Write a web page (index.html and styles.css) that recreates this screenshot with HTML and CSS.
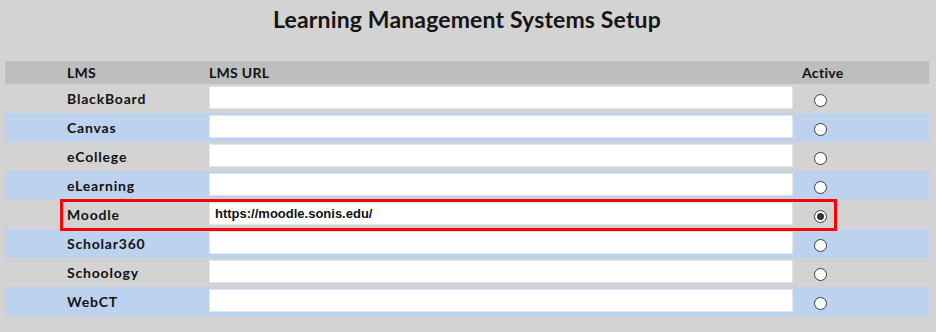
FILE: index.html
```html
<!DOCTYPE html>
<html>
<head>
<meta charset="utf-8">
<link rel="stylesheet" href="styles.css">
</head>
<body>
<div class="page">
  <h1 class="title">Learning Management Systems Setup</h1>
  <div class="table">
    <div class="row head">
      <div class="cell lms">LMS</div>
      <div class="cell url">LMS URL</div>
      <div class="cell act">Active</div>
    </div>
    <div class="row">
      <div class="cell lms">BlackBoard</div>
      <div class="cell url"><input class="field" type="text" value=""></div>
      <div class="cell act"><input class="radio" type="radio" name="lms"></div>
    </div>
    <div class="row alt">
      <div class="cell lms">Canvas</div>
      <div class="cell url"><input class="field" type="text" value=""></div>
      <div class="cell act"><input class="radio" type="radio" name="lms"></div>
    </div>
    <div class="row">
      <div class="cell lms">eCollege</div>
      <div class="cell url"><input class="field" type="text" value=""></div>
      <div class="cell act"><input class="radio" type="radio" name="lms"></div>
    </div>
    <div class="row alt">
      <div class="cell lms">eLearning</div>
      <div class="cell url"><input class="field" type="text" value=""></div>
      <div class="cell act"><input class="radio" type="radio" name="lms"></div>
    </div>
    <div class="row selected">
      <div class="cell lms">Moodle</div>
      <div class="cell url"><input class="field" type="text" value="https://moodle.sonis.edu/"></div>
      <div class="cell act"><input class="radio" type="radio" name="lms" checked></div>
    </div>
    <div class="row alt">
      <div class="cell lms">Scholar360</div>
      <div class="cell url"><input class="field" type="text" value=""></div>
      <div class="cell act"><input class="radio" type="radio" name="lms"></div>
    </div>
    <div class="row">
      <div class="cell lms">Schoology</div>
      <div class="cell url"><input class="field" type="text" value=""></div>
      <div class="cell act"><input class="radio" type="radio" name="lms"></div>
    </div>
    <div class="row alt">
      <div class="cell lms">WebCT</div>
      <div class="cell url"><input class="field" type="text" value=""></div>
      <div class="cell act"><input class="radio" type="radio" name="lms"></div>
    </div>
  </div>
</div>
</body>
</html>
```

FILE: styles.css
```css
html, body {
  margin: 0;
  padding: 0;
  background: #d3d3d3;
}
body {
  font-family: Lato, "Open Sans", sans-serif;
  color: #111;
}
.page {
  padding: 0 7px 0 5px;
}
.title {
  margin: 0;
  padding-top: 6px;
  height: 61px;
  box-sizing: border-box;
  text-align: center;
  font-size: 23px;
  line-height: 26px;
  font-weight: 700;
  letter-spacing: 0.15px;
  color: #151515;
}
.table {
  display: flex;
  flex-direction: column;
}
.row {
  display: grid;
  grid-template-columns: 58px 142px 592px 40px 92px;
  height: 29px;
  background: #d3d3d3;
}
.row.alt {
  background: #bdd2ee;
}
.row.head {
  height: 23px;
  background: #bebebe;
}
.cell {
  grid-row: 1;
  font-size: 14px;
  font-weight: 700;
  letter-spacing: 0.8px;
  line-height: 29px;
  white-space: nowrap;
}
.head .cell {
  line-height: 23px;
  letter-spacing: 0.3px;
}
.lms {
  grid-column: 2;
  padding-left: 4px;
}
.url {
  grid-column: 3;
  padding: 2px 4px 0 4px;
  line-height: normal;
}
.head .url {
  padding-top: 0;
  line-height: 23px;
}
.act {
  grid-column: 4;
  padding-left: 5px;
}
.field {
  display: block;
  box-sizing: border-box;
  width: 584px;
  height: 23px;
  margin: 0;
  border: 1px solid #e4e4e4;
  background: #fff;
  padding: 0 5px;
  font-family: "Liberation Sans", Arial, sans-serif;
  font-weight: 700;
  font-size: 13px;
  letter-spacing: 0;
  color: #111;
  outline: none;
}
.radio {
  -webkit-appearance: none;
  appearance: none;
  display: block;
  box-sizing: border-box;
  width: 13px;
  height: 13px;
  margin: 10px 0 0 12px;
  border: 1px solid #3a3a3a;
  border-radius: 50%;
  background: #fff;
  position: relative;
}
.radio:checked::after {
  content: "";
  position: absolute;
  left: 2px;
  top: 2px;
  width: 7px;
  height: 7px;
  border-radius: 50%;
  background: #333;
}
.selected::after {
  content: "";
  grid-row: 1;
  grid-column: 2 / 5;
  margin: -1px 0 -2px -3px;
  border: 3px solid #ff0000;
  pointer-events: none;
  z-index: 1;
}
```
